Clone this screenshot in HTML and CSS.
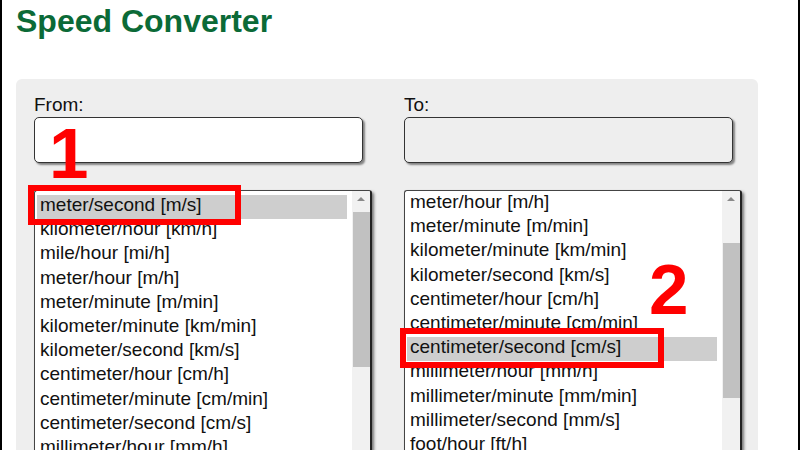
FILE: index.html
```html
<!DOCTYPE html>
<html lang="en">
<head>
<meta charset="utf-8">
<title>Speed Converter</title>
<link rel="stylesheet" href="styles.css">
</head>
<body>
<div class="page">
  <div class="frame">
    <h1 class="title">Speed Converter</h1>
    <div class="panel">
      <div class="col">
        <div class="label">From:</div>
        <div class="field"></div>
        <div class="list">
          <div class="options">
            <div class="opt selected">meter/second [m/s]</div>
            <div class="opt">kilometer/hour [km/h]</div>
            <div class="opt">mile/hour [mi/h]</div>
            <div class="opt">meter/hour [m/h]</div>
            <div class="opt">meter/minute [m/min]</div>
            <div class="opt">kilometer/minute [km/min]</div>
            <div class="opt">kilometer/second [km/s]</div>
            <div class="opt">centimeter/hour [cm/h]</div>
            <div class="opt">centimeter/minute [cm/min]</div>
            <div class="opt">centimeter/second [cm/s]</div>
            <div class="opt">millimeter/hour [mm/h]</div>
            <div class="opt">millimeter/minute [mm/min]</div>
          </div>
          <div class="scrollbar">
            <div class="arrow"></div>
            <div class="thumb thumb-top"></div>
          </div>
        </div>
      </div>
      <div class="col">
        <div class="label">To:</div>
        <div class="field field-readonly"></div>
        <div class="list list-scrolled">
          <div class="options">
            <div class="opt">meter/hour [m/h]</div>
            <div class="opt">meter/minute [m/min]</div>
            <div class="opt">kilometer/minute [km/min]</div>
            <div class="opt">kilometer/second [km/s]</div>
            <div class="opt">centimeter/hour [cm/h]</div>
            <div class="opt">centimeter/minute [cm/min]</div>
            <div class="opt selected">centimeter/second [cm/s]</div>
            <div class="opt">millimeter/hour [mm/h]</div>
            <div class="opt">millimeter/minute [mm/min]</div>
            <div class="opt">millimeter/second [mm/s]</div>
            <div class="opt">foot/hour [ft/h]</div>
            <div class="opt">foot/minute [ft/min]</div>
          </div>
          <div class="scrollbar">
            <div class="arrow"></div>
            <div class="thumb thumb-mid"></div>
          </div>
        </div>
      </div>
    </div>
  </div>
  <div class="mark mark-1"></div>
  <div class="mark mark-2"></div>
  <div class="num num-1">1</div>
  <div class="num num-2">2</div>
</div>
</body>
</html>
```
FILE: styles.css
```css
html, body {
  margin: 0;
  padding: 0;
  background: #ffffff;
}
body {
  font-family: "Liberation Sans", Arial, sans-serif;
  color: #111111;
  overflow: hidden;
}
.page {
  position: relative;
  width: 800px;
  height: 450px;
  overflow: hidden;
}
.frame {
  box-sizing: border-box;
  width: 800px;
  height: 450px;
  border-left: 2px solid #000000;
  border-right: 2px solid #000000;
  overflow: hidden;
}
.title {
  margin: 0;
  padding: 3px 0 0 14px;
  font-size: 32px;
  line-height: 37px;
  font-weight: bold;
  color: #0b6a37;
}
.panel {
  margin: 39px 0 0 14px;
  width: 742px;
  height: 400px;
  box-sizing: border-box;
  background: #eeeeee;
  border-radius: 6px 6px 0 0;
  padding: 15px 16px 0 18px;
  display: grid;
  grid-template-columns: 338px 338px;
  column-gap: 32px;
  align-items: start;
}
.col {
  display: flex;
  flex-direction: column;
}
.label {
  font-size: 19px;
  line-height: 22px;
  height: 22px;
}
.field {
  box-sizing: border-box;
  margin-top: 1px;
  width: 329px;
  height: 46px;
  background: #ffffff;
  border: 1px solid #333333;
  border-radius: 5px;
  box-shadow: 2px 2px 2px rgba(0, 0, 0, 0.45);
}
.field-readonly {
  background: #eeeeee;
}
.list {
  box-sizing: border-box;
  margin-top: 27px;
  width: 338px;
  height: 300px;
  background: #ffffff;
  border: 1px solid #444444;
  border-right: 2px solid #222222;
  border-radius: 3px 3px 0 0;
  box-shadow: 2px 2px 3px rgba(0, 0, 0, 0.5);
  display: flex;
  overflow: hidden;
}
.options {
  flex: 1;
  padding: 4px 5px 0 2px;
  overflow: hidden;
}
.list-scrolled .options {
  padding-top: 1px;
}
.opt {
  font-size: 19px;
  line-height: 20.5px;
  padding: 0 0 3.7px 3px;
  white-space: nowrap;
}
.opt.selected {
  background: #cecece;
}
.scrollbar {
  width: 18px;
  flex: none;
  background: #f1f1f1;
  display: flex;
  flex-direction: column;
  align-items: center;
}
.arrow {
  margin-top: 6px;
  width: 0;
  height: 0;
  border-left: 4px solid transparent;
  border-right: 4px solid transparent;
  border-bottom: 4px solid #8a8a8a;
}
.thumb {
  width: 17px;
  height: 155px;
  background: #c1c1c1;
}
.thumb-top {
  margin-top: 11px;
}
.thumb-mid {
  margin-top: 42px;
}
.mark {
  position: absolute;
  box-sizing: border-box;
  border: 6px solid #ff0000;
}
.mark-1 {
  left: 28px;
  top: 185px;
  width: 213px;
  height: 40px;
}
.mark-2 {
  left: 400px;
  top: 328px;
  width: 264px;
  height: 40px;
}
.num {
  position: absolute;
  font-size: 71px;
  line-height: 1;
  font-weight: bold;
  color: #ff0000;
}
.num-1 {
  left: 49px;
  top: 118px;
}
.num-2 {
  left: 649px;
  top: 254px;
}
```
